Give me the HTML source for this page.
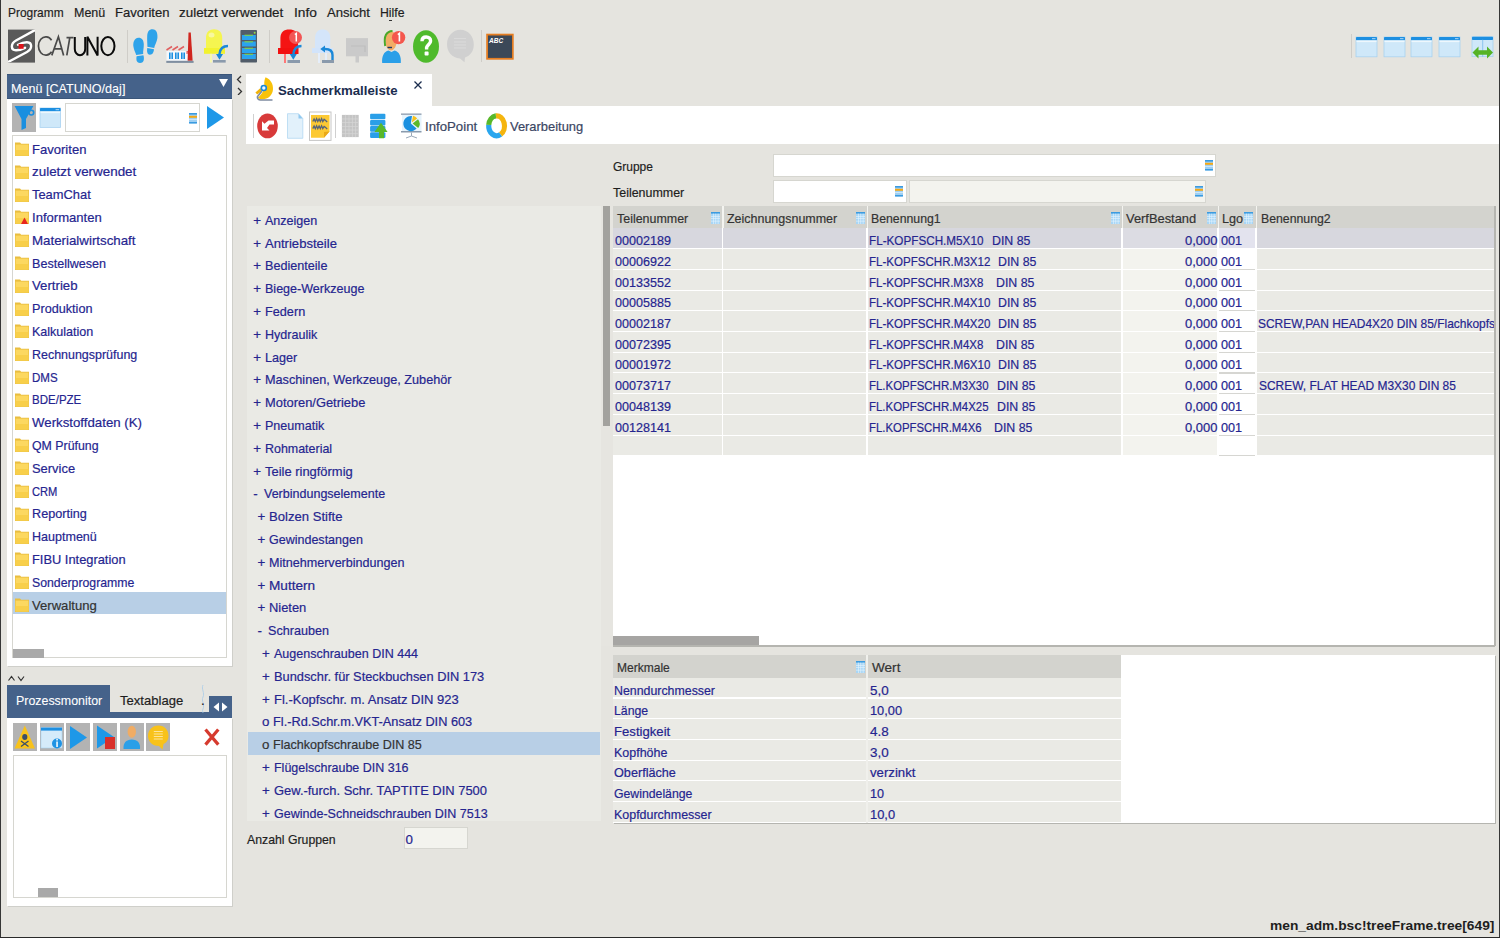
<!DOCTYPE html>
<html><head><meta charset="utf-8"><style>
html,body{margin:0;padding:0}
body{width:1500px;height:938px;overflow:hidden;position:relative;background:#e5e4df;font-family:"Liberation Sans",sans-serif}
.t{position:absolute;white-space:pre;line-height:1;font-family:"Liberation Sans",sans-serif;-webkit-text-stroke:0.2px}
.r{position:absolute}
</style></head><body>
<div class="r" style="left:0px;top:0px;width:1.2px;height:938px;background:#363636"></div>
<div class="r" style="left:1498.8px;top:0px;width:1.2px;height:938px;background:#363636"></div>
<div class="r" style="left:0px;top:936.8px;width:1500px;height:1.2px;background:#2a2a2a"></div>
<div class="t" style="left:7.6px;top:5.74px;font-size:13.3px;color:#1e1e1e;font-weight:normal;transform:scaleX(0.8956);transform-origin:0 0;">Programm</div>
<div class="t" style="left:74px;top:5.74px;font-size:13.3px;color:#1e1e1e;font-weight:normal;transform:scaleX(0.9379);transform-origin:0 0;">Menü</div>
<div class="t" style="left:114.5px;top:5.74px;font-size:13.3px;color:#1e1e1e;font-weight:normal;transform:scaleX(0.9831);transform-origin:0 0;">Favoriten</div>
<div class="t" style="left:179.3px;top:5.74px;font-size:13.3px;color:#1e1e1e;font-weight:normal;transform:scaleX(1.0079);transform-origin:0 0;">zuletzt verwendet</div>
<div class="t" style="left:293.7px;top:5.74px;font-size:13.3px;color:#1e1e1e;font-weight:normal;transform:scaleX(1.0321);transform-origin:0 0;">Info</div>
<div class="t" style="left:327.2px;top:5.74px;font-size:13.3px;color:#1e1e1e;font-weight:normal;transform:scaleX(0.9860);transform-origin:0 0;">Ansicht</div>
<div class="t" style="left:379.5px;top:5.74px;font-size:13.3px;color:#1e1e1e;font-weight:normal;transform:scaleX(0.9207);transform-origin:0 0;">Hilfe</div>
<div class="r" style="left:389px;top:19.5px;width:3px;height:1px;background:#333"></div>
<div class="r" style="left:7px;top:74px;width:225px;height:25px;background:#45628a;box-shadow:inset 0 1px 0 #3b5679, inset 0 -1px 0 #3b5679"></div>
<div class="t" style="left:11.1px;top:81.54px;font-size:13.3px;color:#ffffff;font-weight:normal;transform:scaleX(0.9458);transform-origin:0 0;-webkit-text-stroke:0.1px">Menü [CATUNO/daj]</div>
<svg class="r" style="left:219px;top:79px" width="9" height="8" viewBox="0 0 9 8"><path d="M0 0H9L4.5 8Z" fill="#fff"/></svg>
<div class="r" style="left:7px;top:99px;width:225px;height:567px;background:#fff;box-shadow:1px 1px 0 #cfcfca"></div>
<div class="r" style="left:12px;top:103px;width:24px;height:29px;background:#b3b3b3"></div>
<div class="r" style="left:65px;top:103px;width:135px;height:29px;background:#fff;border:1px solid #d6d6d0;box-sizing:border-box"></div>
<div class="r" style="left:12px;top:135px;width:215px;height:523px;background:#fff;border:1px solid #d6d6d0;box-sizing:border-box"></div>
<div class="t" style="left:31.9px;top:142.64px;font-size:13.3px;color:#25258f;font-weight:normal;transform:scaleX(0.9813);transform-origin:0 0;">Favoriten</div>
<div class="t" style="left:31.9px;top:165.44px;font-size:13.3px;color:#25258f;font-weight:normal;transform:scaleX(1.0079);transform-origin:0 0;">zuletzt verwendet</div>
<div class="t" style="left:31.9px;top:188.24px;font-size:13.3px;color:#25258f;font-weight:normal;transform:scaleX(0.9701);transform-origin:0 0;">TeamChat</div>
<div class="t" style="left:31.9px;top:211.04px;font-size:13.3px;color:#25258f;font-weight:normal;transform:scaleX(0.9835);transform-origin:0 0;">Informanten</div>
<div class="t" style="left:31.9px;top:233.84px;font-size:13.3px;color:#25258f;font-weight:normal;transform:scaleX(1.0005);transform-origin:0 0;">Materialwirtschaft</div>
<div class="t" style="left:31.9px;top:256.64px;font-size:13.3px;color:#25258f;font-weight:normal;transform:scaleX(0.9456);transform-origin:0 0;">Bestellwesen</div>
<div class="t" style="left:31.9px;top:279.44px;font-size:13.3px;color:#25258f;font-weight:normal;transform:scaleX(0.9928);transform-origin:0 0;">Vertrieb</div>
<div class="t" style="left:31.9px;top:302.24px;font-size:13.3px;color:#25258f;font-weight:normal;transform:scaleX(0.9516);transform-origin:0 0;">Produktion</div>
<div class="t" style="left:31.9px;top:325.04px;font-size:13.3px;color:#25258f;font-weight:normal;transform:scaleX(0.9422);transform-origin:0 0;">Kalkulation</div>
<div class="t" style="left:31.9px;top:347.84px;font-size:13.3px;color:#25258f;font-weight:normal;transform:scaleX(0.9370);transform-origin:0 0;">Rechnungsprüfung</div>
<div class="t" style="left:31.9px;top:370.64px;font-size:13.3px;color:#25258f;font-weight:normal;transform:scaleX(0.8693);transform-origin:0 0;">DMS</div>
<div class="t" style="left:31.9px;top:393.44px;font-size:13.3px;color:#25258f;font-weight:normal;transform:scaleX(0.8663);transform-origin:0 0;">BDE/PZE</div>
<div class="t" style="left:31.9px;top:416.24px;font-size:13.3px;color:#25258f;font-weight:normal;transform:scaleX(0.9966);transform-origin:0 0;">Werkstoffdaten (K)</div>
<div class="t" style="left:31.9px;top:439.04px;font-size:13.3px;color:#25258f;font-weight:normal;transform:scaleX(0.9276);transform-origin:0 0;">QM Prüfung</div>
<div class="t" style="left:31.9px;top:461.84px;font-size:13.3px;color:#25258f;font-weight:normal;transform:scaleX(0.9720);transform-origin:0 0;">Service</div>
<div class="t" style="left:31.9px;top:484.64px;font-size:13.3px;color:#25258f;font-weight:normal;transform:scaleX(0.8384);transform-origin:0 0;">CRM</div>
<div class="t" style="left:31.9px;top:507.44px;font-size:13.3px;color:#25258f;font-weight:normal;transform:scaleX(0.9505);transform-origin:0 0;">Reporting</div>
<div class="t" style="left:31.9px;top:530.24px;font-size:13.3px;color:#25258f;font-weight:normal;transform:scaleX(0.9425);transform-origin:0 0;">Hauptmenü</div>
<div class="t" style="left:31.9px;top:553.04px;font-size:13.3px;color:#25258f;font-weight:normal;transform:scaleX(0.9667);transform-origin:0 0;">FIBU Integration</div>
<div class="t" style="left:31.9px;top:575.84px;font-size:13.3px;color:#25258f;font-weight:normal;transform:scaleX(0.9236);transform-origin:0 0;">Sonderprogramme</div>
<div class="r" style="left:13px;top:592.3px;width:213px;height:22px;background:#b8cfe6"></div>
<div class="t" style="left:31.9px;top:598.64px;font-size:13.3px;color:#333;font-weight:normal;transform:scaleX(0.9848);transform-origin:0 0;">Verwaltung</div>
<div class="r" style="left:13px;top:649px;width:31px;height:9px;background:#a9a9a9"></div>
<svg class="r" style="left:7px;top:674px" width="20" height="8" viewBox="0 0 20 8"><path d="M1.5 6.5L4.5 2.5L7.5 6.5M11 2.5L14 6.5L17 2.5" stroke="#333" stroke-width="1.2" fill="none"/></svg>
<div class="r" style="left:7px;top:685px;width:103px;height:33px;background:#45628a"></div>
<div class="r" style="left:7px;top:712px;width:225px;height:6px;background:#45628a"></div>
<div class="r" style="left:209px;top:696px;width:23px;height:22px;background:#45628a"></div>
<svg class="r" style="left:209px;top:696px" width="23" height="22" viewBox="0 0 23 22"><path d="M4.5 11L10 6.5V15.5Z M18.5 11L13 6.5V15.5Z" fill="#fff"/></svg>
<svg class="r" style="left:200px;top:685px" width="6" height="28" viewBox="0 0 6 28"><path d="M3 0 C1 4 5 8 3 12 C1 16 5 20 3 24 C2 26 3 27 3 28" stroke="#a8cbe8" stroke-width="0.8" fill="none"/></svg>
<div class="t" style="left:16px;top:694.14px;font-size:13.3px;color:#ffffff;font-weight:normal;transform:scaleX(0.9332);transform-origin:0 0;-webkit-text-stroke:0.1px">Prozessmonitor</div>
<div class="t" style="left:120px;top:694.14px;font-size:13.3px;color:#1e1e1e;font-weight:normal;transform:scaleX(0.9825);transform-origin:0 0;">Textablage</div>
<div class="t" style="left:201px;top:694.14px;font-size:13.3px;color:#1e1e1e;font-weight:normal;">.</div>
<div class="r" style="left:7px;top:718px;width:225px;height:188px;background:#fff;box-shadow:1px 1px 0 #cfcfca"></div>
<div class="r" style="left:13px;top:723px;width:24px;height:28px;background:#b3b3b3"></div>
<div class="r" style="left:40px;top:723px;width:24px;height:28px;background:#b3b3b3"></div>
<div class="r" style="left:66px;top:723px;width:24px;height:28px;background:#b3b3b3"></div>
<div class="r" style="left:93px;top:723px;width:24px;height:28px;background:#b3b3b3"></div>
<div class="r" style="left:120px;top:723px;width:24px;height:28px;background:#b3b3b3"></div>
<div class="r" style="left:146px;top:723px;width:24px;height:28px;background:#b3b3b3"></div>
<div class="r" style="left:13px;top:755px;width:214px;height:143px;background:#fff;border:1px solid #d6d6d0;box-sizing:border-box"></div>
<div class="r" style="left:38px;top:888px;width:20px;height:9px;background:#a9a9a9"></div>
<svg class="r" style="left:236px;top:75px" width="7" height="20" viewBox="0 0 7 20"><path d="M5 1L1.5 4.5L5 8M2 13L5.5 16.5L2 20" stroke="#333" stroke-width="1.3" fill="none"/></svg>
<div class="r" style="left:246px;top:74px;width:186px;height:32px;background:#fff"></div>
<div class="t" style="left:277.9px;top:84.44px;font-size:13.3px;color:#1b2d4f;font-weight:bold;-webkit-text-stroke:0;transform:scaleX(0.9918);transform-origin:0 0;">Sachmerkmalleiste</div>
<svg class="r" style="left:414px;top:81px" width="8" height="8" viewBox="0 0 8 8"><path d="M0.5 0.5L7.5 7.5M7.5 0.5L0.5 7.5" stroke="#1b2d4f" stroke-width="1.3"/></svg>
<div class="r" style="left:246px;top:106px;width:1253px;height:38px;background:#fff"></div>
<div class="t" style="left:425px;top:120.04px;font-size:13.3px;color:#3a4663;font-weight:normal;transform:scaleX(0.9943);transform-origin:0 0;">InfoPoint</div>
<div class="t" style="left:510px;top:120.04px;font-size:13.3px;color:#3a4663;font-weight:normal;transform:scaleX(0.9707);transform-origin:0 0;">Verarbeitung</div>
<div class="t" style="left:613px;top:160.44px;font-size:13.3px;color:#1e1e1e;font-weight:normal;transform:scaleX(0.8995);transform-origin:0 0;">Gruppe</div>
<div class="t" style="left:613px;top:186.04px;font-size:13.3px;color:#1e1e1e;font-weight:normal;transform:scaleX(0.9353);transform-origin:0 0;">Teilenummer</div>
<div class="r" style="left:773px;top:154px;width:443px;height:23px;background:#fff;border:1px solid #d6d6d0;box-sizing:border-box"></div>
<div class="r" style="left:773px;top:180px;width:134px;height:22.5px;background:#fff;border:1px solid #d6d6d0;box-sizing:border-box"></div>
<div class="r" style="left:909px;top:180px;width:297px;height:22.5px;background:#f3f3ee;border:1px solid #d6d6d0;box-sizing:border-box"></div>
<div class="r" style="left:247px;top:206px;width:354px;height:615px;background:#eaeae5"></div>
<div class="r" style="left:601px;top:206px;width:12px;height:440px;background:#e6e5e0"></div>
<div class="r" style="left:602.5px;top:206px;width:7.5px;height:220px;background:#a3a29e"></div>
<div class="t" style="left:253.2px;top:213.74px;font-size:13.3px;color:#25258f;font-weight:normal;">+</div>
<div class="t" style="left:264.8px;top:213.74px;font-size:13.3px;color:#25258f;font-weight:normal;transform:scaleX(0.9431);transform-origin:0 0;">Anzeigen</div>
<div class="t" style="left:253.2px;top:236.54px;font-size:13.3px;color:#25258f;font-weight:normal;">+</div>
<div class="t" style="left:264.8px;top:236.54px;font-size:13.3px;color:#25258f;font-weight:normal;transform:scaleX(0.9826);transform-origin:0 0;">Antriebsteile</div>
<div class="t" style="left:253.2px;top:259.34px;font-size:13.3px;color:#25258f;font-weight:normal;">+</div>
<div class="t" style="left:264.8px;top:259.34px;font-size:13.3px;color:#25258f;font-weight:normal;transform:scaleX(0.9484);transform-origin:0 0;">Bedienteile</div>
<div class="t" style="left:253.2px;top:282.14px;font-size:13.3px;color:#25258f;font-weight:normal;">+</div>
<div class="t" style="left:264.8px;top:282.14px;font-size:13.3px;color:#25258f;font-weight:normal;transform:scaleX(0.9426);transform-origin:0 0;">Biege-Werkzeuge</div>
<div class="t" style="left:253.2px;top:304.94px;font-size:13.3px;color:#25258f;font-weight:normal;">+</div>
<div class="t" style="left:264.8px;top:304.94px;font-size:13.3px;color:#25258f;font-weight:normal;transform:scaleX(0.9539);transform-origin:0 0;">Federn</div>
<div class="t" style="left:253.2px;top:327.74px;font-size:13.3px;color:#25258f;font-weight:normal;">+</div>
<div class="t" style="left:264.8px;top:327.74px;font-size:13.3px;color:#25258f;font-weight:normal;transform:scaleX(0.9437);transform-origin:0 0;">Hydraulik</div>
<div class="t" style="left:253.2px;top:350.54px;font-size:13.3px;color:#25258f;font-weight:normal;">+</div>
<div class="t" style="left:264.8px;top:350.54px;font-size:13.3px;color:#25258f;font-weight:normal;transform:scaleX(0.9496);transform-origin:0 0;">Lager</div>
<div class="t" style="left:253.2px;top:373.34px;font-size:13.3px;color:#25258f;font-weight:normal;">+</div>
<div class="t" style="left:264.8px;top:373.34px;font-size:13.3px;color:#25258f;font-weight:normal;transform:scaleX(0.9534);transform-origin:0 0;">Maschinen, Werkzeuge, Zubehör</div>
<div class="t" style="left:253.2px;top:396.14px;font-size:13.3px;color:#25258f;font-weight:normal;">+</div>
<div class="t" style="left:264.8px;top:396.14px;font-size:13.3px;color:#25258f;font-weight:normal;transform:scaleX(0.9702);transform-origin:0 0;">Motoren/Getriebe</div>
<div class="t" style="left:253.2px;top:418.94px;font-size:13.3px;color:#25258f;font-weight:normal;">+</div>
<div class="t" style="left:264.8px;top:418.94px;font-size:13.3px;color:#25258f;font-weight:normal;transform:scaleX(0.9423);transform-origin:0 0;">Pneumatik</div>
<div class="t" style="left:253.2px;top:441.74px;font-size:13.3px;color:#25258f;font-weight:normal;">+</div>
<div class="t" style="left:264.8px;top:441.74px;font-size:13.3px;color:#25258f;font-weight:normal;transform:scaleX(0.9360);transform-origin:0 0;">Rohmaterial</div>
<div class="t" style="left:253.2px;top:464.54px;font-size:13.3px;color:#25258f;font-weight:normal;">+</div>
<div class="t" style="left:264.8px;top:464.54px;font-size:13.3px;color:#25258f;font-weight:normal;transform:scaleX(0.9728);transform-origin:0 0;">Teile ringförmig</div>
<div class="t" style="left:253.2px;top:487.34px;font-size:13.3px;color:#25258f;font-weight:normal;">-</div>
<div class="t" style="left:263.7px;top:487.34px;font-size:13.3px;color:#25258f;font-weight:normal;transform:scaleX(0.9414);transform-origin:0 0;">Verbindungselemente</div>
<div class="t" style="left:257.5px;top:510.14px;font-size:13.3px;color:#25258f;font-weight:normal;">+</div>
<div class="t" style="left:269.1px;top:510.14px;font-size:13.3px;color:#25258f;font-weight:normal;transform:scaleX(0.9845);transform-origin:0 0;">Bolzen Stifte</div>
<div class="t" style="left:257.5px;top:532.94px;font-size:13.3px;color:#25258f;font-weight:normal;">+</div>
<div class="t" style="left:269.1px;top:532.94px;font-size:13.3px;color:#25258f;font-weight:normal;transform:scaleX(0.9408);transform-origin:0 0;">Gewindestangen</div>
<div class="t" style="left:257.5px;top:555.74px;font-size:13.3px;color:#25258f;font-weight:normal;">+</div>
<div class="t" style="left:269.1px;top:555.74px;font-size:13.3px;color:#25258f;font-weight:normal;transform:scaleX(0.9449);transform-origin:0 0;">Mitnehmerverbindungen</div>
<div class="t" style="left:257.5px;top:578.54px;font-size:13.3px;color:#25258f;font-weight:normal;">+</div>
<div class="t" style="left:269.1px;top:578.54px;font-size:13.3px;color:#25258f;font-weight:normal;transform:scaleX(1.0245);transform-origin:0 0;">Muttern</div>
<div class="t" style="left:257.5px;top:601.34px;font-size:13.3px;color:#25258f;font-weight:normal;">+</div>
<div class="t" style="left:269.1px;top:601.34px;font-size:13.3px;color:#25258f;font-weight:normal;transform:scaleX(0.9704);transform-origin:0 0;">Nieten</div>
<div class="t" style="left:257.5px;top:624.14px;font-size:13.3px;color:#25258f;font-weight:normal;">-</div>
<div class="t" style="left:268.0px;top:624.14px;font-size:13.3px;color:#25258f;font-weight:normal;transform:scaleX(0.9467);transform-origin:0 0;">Schrauben</div>
<div class="t" style="left:261.9px;top:646.94px;font-size:13.3px;color:#25258f;font-weight:normal;">+</div>
<div class="t" style="left:273.5px;top:646.94px;font-size:13.3px;color:#25258f;font-weight:normal;transform:scaleX(0.9416);transform-origin:0 0;">Augenschrauben DIN 444</div>
<div class="t" style="left:261.9px;top:669.74px;font-size:13.3px;color:#25258f;font-weight:normal;">+</div>
<div class="t" style="left:273.5px;top:669.74px;font-size:13.3px;color:#25258f;font-weight:normal;transform:scaleX(0.9640);transform-origin:0 0;">Bundschr. für Steckbuchsen DIN 173</div>
<div class="t" style="left:261.9px;top:692.54px;font-size:13.3px;color:#25258f;font-weight:normal;">+</div>
<div class="t" style="left:273.5px;top:692.54px;font-size:13.3px;color:#25258f;font-weight:normal;transform:scaleX(0.9763);transform-origin:0 0;">Fl.-Kopfschr. m. Ansatz DIN 923</div>
<div class="t" style="left:261.9px;top:715.34px;font-size:13.3px;color:#25258f;font-weight:normal;">o</div>
<div class="t" style="left:272.9px;top:715.34px;font-size:13.3px;color:#25258f;font-weight:normal;transform:scaleX(0.9593);transform-origin:0 0;">Fl.-Rd.Schr.m.VKT-Ansatz DIN 603</div>
<div class="r" style="left:248px;top:732.0px;width:352px;height:22.6px;background:#b8cfe6"></div>
<div class="t" style="left:261.9px;top:738.14px;font-size:13.3px;color:#333;font-weight:normal;">o</div>
<div class="t" style="left:272.9px;top:738.14px;font-size:13.3px;color:#333;font-weight:normal;transform:scaleX(0.9451);transform-origin:0 0;">Flachkopfschraube DIN 85</div>
<div class="t" style="left:261.9px;top:760.94px;font-size:13.3px;color:#25258f;font-weight:normal;">+</div>
<div class="t" style="left:273.5px;top:760.94px;font-size:13.3px;color:#25258f;font-weight:normal;transform:scaleX(0.9380);transform-origin:0 0;">Flügelschraube DIN 316</div>
<div class="t" style="left:261.9px;top:783.74px;font-size:13.3px;color:#25258f;font-weight:normal;">+</div>
<div class="t" style="left:273.5px;top:783.74px;font-size:13.3px;color:#25258f;font-weight:normal;transform:scaleX(0.9727);transform-origin:0 0;">Gew.-furch. Schr. TAPTITE DIN 7500</div>
<div class="t" style="left:261.9px;top:806.54px;font-size:13.3px;color:#25258f;font-weight:normal;">+</div>
<div class="t" style="left:273.5px;top:806.54px;font-size:13.3px;color:#25258f;font-weight:normal;transform:scaleX(0.9417);transform-origin:0 0;">Gewinde-Schneidschrauben DIN 7513</div>
<div class="t" style="left:246.5px;top:833.44px;font-size:13.3px;color:#1e1e1e;font-weight:normal;transform:scaleX(0.9229);transform-origin:0 0;">Anzahl Gruppen</div>
<div class="r" style="left:404px;top:827px;width:64px;height:22px;background:#f3f3ee;border:1px solid #d6d6d0;box-sizing:border-box"></div>
<div class="t" style="left:405.5px;top:832.74px;font-size:13.3px;color:#25258f;font-weight:normal;">0</div>
<div class="r" style="left:613px;top:206px;width:882px;height:440px;background:#fff"></div>
<div class="r" style="left:613px;top:206px;width:882px;height:22px;background:#d3d3ce"></div>
<div class="r" style="left:613px;top:228.4px;width:109px;height:19.7px;background:#d7d7de"></div>
<div class="r" style="left:723px;top:228.4px;width:143px;height:19.7px;background:#d7d7de"></div>
<div class="r" style="left:868px;top:228.4px;width:253px;height:19.7px;background:#d7d7de"></div>
<div class="r" style="left:1123px;top:228.4px;width:94px;height:19.7px;background:#dcdce3"></div>
<div class="r" style="left:1219px;top:228.4px;width:36px;height:19.7px;background:#e3e3ee"></div>
<div class="r" style="left:1257px;top:228.4px;width:238px;height:19.7px;background:#d7d7de"></div>
<div class="r" style="left:613px;top:249.12px;width:109px;height:19.7px;background:#eaeae5"></div>
<div class="r" style="left:723px;top:249.12px;width:143px;height:19.7px;background:#eaeae5"></div>
<div class="r" style="left:868px;top:249.12px;width:253px;height:19.7px;background:#eaeae5"></div>
<div class="r" style="left:1123px;top:249.12px;width:94px;height:19.7px;background:#f3f3ee"></div>
<div class="r" style="left:1219px;top:249.12px;width:36px;height:19.7px;background:#ffffff"></div>
<div class="r" style="left:1257px;top:249.12px;width:238px;height:19.7px;background:#eaeae5"></div>
<div class="r" style="left:613px;top:269.84px;width:109px;height:19.7px;background:#eaeae5"></div>
<div class="r" style="left:723px;top:269.84px;width:143px;height:19.7px;background:#eaeae5"></div>
<div class="r" style="left:868px;top:269.84px;width:253px;height:19.7px;background:#eaeae5"></div>
<div class="r" style="left:1123px;top:269.84px;width:94px;height:19.7px;background:#f3f3ee"></div>
<div class="r" style="left:1219px;top:269.84px;width:36px;height:19.7px;background:#ffffff"></div>
<div class="r" style="left:1257px;top:269.84px;width:238px;height:19.7px;background:#eaeae5"></div>
<div class="r" style="left:613px;top:290.56px;width:109px;height:19.7px;background:#eaeae5"></div>
<div class="r" style="left:723px;top:290.56px;width:143px;height:19.7px;background:#eaeae5"></div>
<div class="r" style="left:868px;top:290.56px;width:253px;height:19.7px;background:#eaeae5"></div>
<div class="r" style="left:1123px;top:290.56px;width:94px;height:19.7px;background:#f3f3ee"></div>
<div class="r" style="left:1219px;top:290.56px;width:36px;height:19.7px;background:#ffffff"></div>
<div class="r" style="left:1257px;top:290.56px;width:238px;height:19.7px;background:#eaeae5"></div>
<div class="r" style="left:613px;top:311.28px;width:109px;height:19.7px;background:#eaeae5"></div>
<div class="r" style="left:723px;top:311.28px;width:143px;height:19.7px;background:#eaeae5"></div>
<div class="r" style="left:868px;top:311.28px;width:253px;height:19.7px;background:#eaeae5"></div>
<div class="r" style="left:1123px;top:311.28px;width:94px;height:19.7px;background:#f3f3ee"></div>
<div class="r" style="left:1219px;top:311.28px;width:36px;height:19.7px;background:#ffffff"></div>
<div class="r" style="left:1257px;top:311.28px;width:238px;height:19.7px;background:#eaeae5"></div>
<div class="r" style="left:613px;top:332.0px;width:109px;height:19.7px;background:#eaeae5"></div>
<div class="r" style="left:723px;top:332.0px;width:143px;height:19.7px;background:#eaeae5"></div>
<div class="r" style="left:868px;top:332.0px;width:253px;height:19.7px;background:#eaeae5"></div>
<div class="r" style="left:1123px;top:332.0px;width:94px;height:19.7px;background:#f3f3ee"></div>
<div class="r" style="left:1219px;top:332.0px;width:36px;height:19.7px;background:#ffffff"></div>
<div class="r" style="left:1257px;top:332.0px;width:238px;height:19.7px;background:#eaeae5"></div>
<div class="r" style="left:613px;top:352.72px;width:109px;height:19.7px;background:#eaeae5"></div>
<div class="r" style="left:723px;top:352.72px;width:143px;height:19.7px;background:#eaeae5"></div>
<div class="r" style="left:868px;top:352.72px;width:253px;height:19.7px;background:#eaeae5"></div>
<div class="r" style="left:1123px;top:352.72px;width:94px;height:19.7px;background:#f3f3ee"></div>
<div class="r" style="left:1219px;top:352.72px;width:36px;height:19.7px;background:#ffffff"></div>
<div class="r" style="left:1257px;top:352.72px;width:238px;height:19.7px;background:#eaeae5"></div>
<div class="r" style="left:613px;top:373.44px;width:109px;height:19.7px;background:#eaeae5"></div>
<div class="r" style="left:723px;top:373.44px;width:143px;height:19.7px;background:#eaeae5"></div>
<div class="r" style="left:868px;top:373.44px;width:253px;height:19.7px;background:#eaeae5"></div>
<div class="r" style="left:1123px;top:373.44px;width:94px;height:19.7px;background:#f3f3ee"></div>
<div class="r" style="left:1219px;top:373.44px;width:36px;height:19.7px;background:#ffffff"></div>
<div class="r" style="left:1257px;top:373.44px;width:238px;height:19.7px;background:#eaeae5"></div>
<div class="r" style="left:613px;top:394.16px;width:109px;height:19.7px;background:#eaeae5"></div>
<div class="r" style="left:723px;top:394.16px;width:143px;height:19.7px;background:#eaeae5"></div>
<div class="r" style="left:868px;top:394.16px;width:253px;height:19.7px;background:#eaeae5"></div>
<div class="r" style="left:1123px;top:394.16px;width:94px;height:19.7px;background:#f3f3ee"></div>
<div class="r" style="left:1219px;top:394.16px;width:36px;height:19.7px;background:#ffffff"></div>
<div class="r" style="left:1257px;top:394.16px;width:238px;height:19.7px;background:#eaeae5"></div>
<div class="r" style="left:613px;top:414.88px;width:109px;height:19.7px;background:#eaeae5"></div>
<div class="r" style="left:723px;top:414.88px;width:143px;height:19.7px;background:#eaeae5"></div>
<div class="r" style="left:868px;top:414.88px;width:253px;height:19.7px;background:#eaeae5"></div>
<div class="r" style="left:1123px;top:414.88px;width:94px;height:19.7px;background:#f3f3ee"></div>
<div class="r" style="left:1219px;top:414.88px;width:36px;height:19.7px;background:#ffffff"></div>
<div class="r" style="left:1257px;top:414.88px;width:238px;height:19.7px;background:#eaeae5"></div>
<div class="r" style="left:613px;top:435.6px;width:109px;height:19.7px;background:#eaeae5"></div>
<div class="r" style="left:723px;top:435.6px;width:143px;height:19.7px;background:#eaeae5"></div>
<div class="r" style="left:868px;top:435.6px;width:253px;height:19.7px;background:#eaeae5"></div>
<div class="r" style="left:1123px;top:435.6px;width:94px;height:19.7px;background:#f3f3ee"></div>
<div class="r" style="left:1219px;top:435.6px;width:36px;height:19.7px;background:#ffffff"></div>
<div class="r" style="left:1257px;top:435.6px;width:238px;height:19.7px;background:#eaeae5"></div>
<div class="r" style="left:722px;top:206px;width:1.5px;height:22px;background:#f4f4f0"></div>
<div class="r" style="left:866.5px;top:206px;width:1.5px;height:22px;background:#f4f4f0"></div>
<div class="r" style="left:1121.5px;top:206px;width:1.5px;height:22px;background:#f4f4f0"></div>
<div class="r" style="left:1217.5px;top:206px;width:1.5px;height:22px;background:#f4f4f0"></div>
<div class="r" style="left:1255.5px;top:206px;width:1.5px;height:22px;background:#f4f4f0"></div>
<div class="r" style="left:1219px;top:268.82px;width:36px;height:1.2px;background:#d6d6d2"></div>
<div class="r" style="left:1219px;top:289.54px;width:36px;height:1.2px;background:#d6d6d2"></div>
<div class="r" style="left:1219px;top:310.26px;width:36px;height:1.2px;background:#d6d6d2"></div>
<div class="r" style="left:1219px;top:330.98px;width:36px;height:1.2px;background:#d6d6d2"></div>
<div class="r" style="left:1219px;top:351.7px;width:36px;height:1.2px;background:#d6d6d2"></div>
<div class="r" style="left:1219px;top:372.42px;width:36px;height:1.2px;background:#d6d6d2"></div>
<div class="r" style="left:1219px;top:393.14px;width:36px;height:1.2px;background:#d6d6d2"></div>
<div class="r" style="left:1219px;top:413.86px;width:36px;height:1.2px;background:#d6d6d2"></div>
<div class="r" style="left:1219px;top:434.58px;width:36px;height:1.2px;background:#d6d6d2"></div>
<div class="r" style="left:1219px;top:455.3px;width:36px;height:1.2px;background:#d6d6d2"></div>
<div class="t" style="left:617px;top:211.74px;font-size:13.3px;color:#333;font-weight:normal;transform:scaleX(0.9353);transform-origin:0 0;">Teilenummer</div>
<div class="t" style="left:727px;top:211.74px;font-size:13.3px;color:#333;font-weight:normal;transform:scaleX(0.9377);transform-origin:0 0;">Zeichnungsnummer</div>
<div class="t" style="left:871.3px;top:211.74px;font-size:13.3px;color:#333;font-weight:normal;transform:scaleX(0.9239);transform-origin:0 0;">Benennung1</div>
<div class="t" style="left:1126.4px;top:211.74px;font-size:13.3px;color:#333;font-weight:normal;transform:scaleX(0.9689);transform-origin:0 0;">VerfBestand</div>
<div class="t" style="left:1222.4px;top:211.74px;font-size:13.3px;color:#333;font-weight:normal;transform:scaleX(0.9510);transform-origin:0 0;">Lgo</div>
<div class="t" style="left:1260.6px;top:211.74px;font-size:13.3px;color:#333;font-weight:normal;transform:scaleX(0.9239);transform-origin:0 0;">Benennung2</div>
<div class="t" style="left:614.5px;top:234.14px;font-size:13.3px;color:#25258f;font-weight:normal;transform:scaleX(0.9447);transform-origin:0 0;">00002189</div>
<div class="t" style="left:869.4px;top:234.14px;font-size:13.3px;color:#25258f;font-weight:normal;transform:scaleX(0.8796);transform-origin:0 0;">FL-KOPFSCH.M5X10</div>
<div class="t" style="left:991.8px;top:234.14px;font-size:13.3px;color:#25258f;font-weight:normal;transform:scaleX(0.9277);transform-origin:0 0;">DIN 85</div>
<div class="t" style="left:1185.2px;top:234.14px;font-size:13.3px;color:#25258f;font-weight:normal;transform:scaleX(0.9735);transform-origin:0 0;">0,000</div>
<div class="t" style="left:1220.6px;top:234.14px;font-size:13.3px;color:#25258f;font-weight:normal;transform:scaleX(0.9510);transform-origin:0 0;">001</div>
<div class="t" style="left:614.5px;top:254.86px;font-size:13.3px;color:#25258f;font-weight:normal;transform:scaleX(0.9447);transform-origin:0 0;">00006922</div>
<div class="t" style="left:869.4px;top:254.86px;font-size:13.3px;color:#25258f;font-weight:normal;transform:scaleX(0.8693);transform-origin:0 0;">FL-KOPFSCHR.M3X12</div>
<div class="t" style="left:998.3px;top:254.86px;font-size:13.3px;color:#25258f;font-weight:normal;transform:scaleX(0.9277);transform-origin:0 0;">DIN 85</div>
<div class="t" style="left:1185.2px;top:254.86px;font-size:13.3px;color:#25258f;font-weight:normal;transform:scaleX(0.9735);transform-origin:0 0;">0,000</div>
<div class="t" style="left:1220.6px;top:254.86px;font-size:13.3px;color:#25258f;font-weight:normal;transform:scaleX(0.9510);transform-origin:0 0;">001</div>
<div class="t" style="left:614.5px;top:275.58px;font-size:13.3px;color:#25258f;font-weight:normal;transform:scaleX(0.9447);transform-origin:0 0;">00133552</div>
<div class="t" style="left:869.4px;top:275.58px;font-size:13.3px;color:#25258f;font-weight:normal;transform:scaleX(0.8649);transform-origin:0 0;">FL-KOPFSCHR.M3X8</div>
<div class="t" style="left:995.7px;top:275.58px;font-size:13.3px;color:#25258f;font-weight:normal;transform:scaleX(0.9277);transform-origin:0 0;">DIN 85</div>
<div class="t" style="left:1185.2px;top:275.58px;font-size:13.3px;color:#25258f;font-weight:normal;transform:scaleX(0.9735);transform-origin:0 0;">0,000</div>
<div class="t" style="left:1220.6px;top:275.58px;font-size:13.3px;color:#25258f;font-weight:normal;transform:scaleX(0.9510);transform-origin:0 0;">001</div>
<div class="t" style="left:614.5px;top:296.30px;font-size:13.3px;color:#25258f;font-weight:normal;transform:scaleX(0.9447);transform-origin:0 0;">00005885</div>
<div class="t" style="left:869.4px;top:296.30px;font-size:13.3px;color:#25258f;font-weight:normal;transform:scaleX(0.8693);transform-origin:0 0;">FL-KOPFSCHR.M4X10</div>
<div class="t" style="left:998.3px;top:296.30px;font-size:13.3px;color:#25258f;font-weight:normal;transform:scaleX(0.9277);transform-origin:0 0;">DIN 85</div>
<div class="t" style="left:1185.2px;top:296.30px;font-size:13.3px;color:#25258f;font-weight:normal;transform:scaleX(0.9735);transform-origin:0 0;">0,000</div>
<div class="t" style="left:1220.6px;top:296.30px;font-size:13.3px;color:#25258f;font-weight:normal;transform:scaleX(0.9510);transform-origin:0 0;">001</div>
<div class="t" style="left:614.5px;top:317.02px;font-size:13.3px;color:#25258f;font-weight:normal;transform:scaleX(0.9447);transform-origin:0 0;">00002187</div>
<div class="t" style="left:869.4px;top:317.02px;font-size:13.3px;color:#25258f;font-weight:normal;transform:scaleX(0.8693);transform-origin:0 0;">FL-KOPFSCHR.M4X20</div>
<div class="t" style="left:998.3px;top:317.02px;font-size:13.3px;color:#25258f;font-weight:normal;transform:scaleX(0.9277);transform-origin:0 0;">DIN 85</div>
<div class="t" style="left:1185.2px;top:317.02px;font-size:13.3px;color:#25258f;font-weight:normal;transform:scaleX(0.9735);transform-origin:0 0;">0,000</div>
<div class="t" style="left:1220.6px;top:317.02px;font-size:13.3px;color:#25258f;font-weight:normal;transform:scaleX(0.9510);transform-origin:0 0;">001</div>
<div class="t" style="left:614.5px;top:337.74px;font-size:13.3px;color:#25258f;font-weight:normal;transform:scaleX(0.9447);transform-origin:0 0;">00072395</div>
<div class="t" style="left:869.4px;top:337.74px;font-size:13.3px;color:#25258f;font-weight:normal;transform:scaleX(0.8649);transform-origin:0 0;">FL-KOPFSCHR.M4X8</div>
<div class="t" style="left:995.7px;top:337.74px;font-size:13.3px;color:#25258f;font-weight:normal;transform:scaleX(0.9277);transform-origin:0 0;">DIN 85</div>
<div class="t" style="left:1185.2px;top:337.74px;font-size:13.3px;color:#25258f;font-weight:normal;transform:scaleX(0.9735);transform-origin:0 0;">0,000</div>
<div class="t" style="left:1220.6px;top:337.74px;font-size:13.3px;color:#25258f;font-weight:normal;transform:scaleX(0.9510);transform-origin:0 0;">001</div>
<div class="t" style="left:614.5px;top:358.46px;font-size:13.3px;color:#25258f;font-weight:normal;transform:scaleX(0.9447);transform-origin:0 0;">00001972</div>
<div class="t" style="left:869.4px;top:358.46px;font-size:13.3px;color:#25258f;font-weight:normal;transform:scaleX(0.8693);transform-origin:0 0;">FL-KOPFSCHR.M6X10</div>
<div class="t" style="left:998.3px;top:358.46px;font-size:13.3px;color:#25258f;font-weight:normal;transform:scaleX(0.9277);transform-origin:0 0;">DIN 85</div>
<div class="t" style="left:1185.2px;top:358.46px;font-size:13.3px;color:#25258f;font-weight:normal;transform:scaleX(0.9735);transform-origin:0 0;">0,000</div>
<div class="t" style="left:1220.6px;top:358.46px;font-size:13.3px;color:#25258f;font-weight:normal;transform:scaleX(0.9510);transform-origin:0 0;">001</div>
<div class="t" style="left:614.5px;top:379.18px;font-size:13.3px;color:#25258f;font-weight:normal;transform:scaleX(0.9447);transform-origin:0 0;">00073717</div>
<div class="t" style="left:869.4px;top:379.18px;font-size:13.3px;color:#25258f;font-weight:normal;transform:scaleX(0.8609);transform-origin:0 0;">FL.KOPFSCHR.M3X30</div>
<div class="t" style="left:996.6px;top:379.18px;font-size:13.3px;color:#25258f;font-weight:normal;transform:scaleX(0.9277);transform-origin:0 0;">DIN 85</div>
<div class="t" style="left:1185.2px;top:379.18px;font-size:13.3px;color:#25258f;font-weight:normal;transform:scaleX(0.9735);transform-origin:0 0;">0,000</div>
<div class="t" style="left:1220.6px;top:379.18px;font-size:13.3px;color:#25258f;font-weight:normal;transform:scaleX(0.9510);transform-origin:0 0;">001</div>
<div class="t" style="left:614.5px;top:399.90px;font-size:13.3px;color:#25258f;font-weight:normal;transform:scaleX(0.9447);transform-origin:0 0;">00048139</div>
<div class="t" style="left:869.4px;top:399.90px;font-size:13.3px;color:#25258f;font-weight:normal;transform:scaleX(0.8609);transform-origin:0 0;">FL.KOPFSCHR.M4X25</div>
<div class="t" style="left:996.6px;top:399.90px;font-size:13.3px;color:#25258f;font-weight:normal;transform:scaleX(0.9277);transform-origin:0 0;">DIN 85</div>
<div class="t" style="left:1185.2px;top:399.90px;font-size:13.3px;color:#25258f;font-weight:normal;transform:scaleX(0.9735);transform-origin:0 0;">0,000</div>
<div class="t" style="left:1220.6px;top:399.90px;font-size:13.3px;color:#25258f;font-weight:normal;transform:scaleX(0.9510);transform-origin:0 0;">001</div>
<div class="t" style="left:614.5px;top:420.62px;font-size:13.3px;color:#25258f;font-weight:normal;transform:scaleX(0.9447);transform-origin:0 0;">00128141</div>
<div class="t" style="left:869.4px;top:420.62px;font-size:13.3px;color:#25258f;font-weight:normal;transform:scaleX(0.8561);transform-origin:0 0;">FL.KOPFSCHR.M4X6</div>
<div class="t" style="left:994px;top:420.62px;font-size:13.3px;color:#25258f;font-weight:normal;transform:scaleX(0.9277);transform-origin:0 0;">DIN 85</div>
<div class="t" style="left:1185.2px;top:420.62px;font-size:13.3px;color:#25258f;font-weight:normal;transform:scaleX(0.9735);transform-origin:0 0;">0,000</div>
<div class="t" style="left:1220.6px;top:420.62px;font-size:13.3px;color:#25258f;font-weight:normal;transform:scaleX(0.9510);transform-origin:0 0;">001</div>
<div class="r" style="left:1257px;top:313.3px;width:237px;height:19px;overflow:hidden"><div class="t" style="left:0.9px;top:3.74px;font-size:13.3px;color:#25258f;transform:scaleX(0.8992);transform-origin:0 0">SCREW,PAN HEAD4X20 DIN 85/Flachkopfschraube</div></div>
<div class="t" style="left:1258.6px;top:379.18px;font-size:13.3px;color:#25258f;font-weight:normal;transform:scaleX(0.8992);transform-origin:0 0;">SCREW, FLAT HEAD M3X30 DIN 85</div>
<div class="r" style="left:613px;top:635.6px;width:146px;height:9.6px;background:#a6a5a3"></div>
<div class="r" style="left:613px;top:645px;width:882px;height:1.5px;background:#b5b5b0"></div>
<div class="r" style="left:1494px;top:206px;width:1.5px;height:440px;background:#b5b5b0"></div>
<div class="r" style="left:613px;top:655px;width:882px;height:168px;background:#fff;box-shadow:1px 1px 0 #b5b5b0"></div>
<div class="r" style="left:613px;top:655px;width:508px;height:23px;background:#d3d3ce"></div>
<div class="r" style="left:866px;top:655px;width:2px;height:168px;background:#f0f0ec"></div>
<div class="t" style="left:617.4px;top:661.44px;font-size:13.3px;color:#333;font-weight:normal;transform:scaleX(0.9045);transform-origin:0 0;">Merkmale</div>
<div class="t" style="left:871.7px;top:661.44px;font-size:13.3px;color:#333;font-weight:normal;transform:scaleX(1.0206);transform-origin:0 0;">Wert</div>
<div class="r" style="left:613px;top:677.8px;width:253px;height:19.6px;background:#eaeae5"></div>
<div class="r" style="left:868px;top:677.8px;width:253px;height:19.6px;background:#eaeae5"></div>
<div class="t" style="left:614.3px;top:683.54px;font-size:13.3px;color:#25258f;font-weight:normal;transform:scaleX(0.9295);transform-origin:0 0;">Nenndurchmesser</div>
<div class="t" style="left:869.8px;top:683.54px;font-size:13.3px;color:#25258f;font-weight:normal;transform:scaleX(1.0108);transform-origin:0 0;">5,0</div>
<div class="r" style="left:613px;top:698.52px;width:253px;height:19.6px;background:#eaeae5"></div>
<div class="r" style="left:868px;top:698.52px;width:253px;height:19.6px;background:#eaeae5"></div>
<div class="t" style="left:614.3px;top:704.26px;font-size:13.3px;color:#25258f;font-weight:normal;transform:scaleX(0.9247);transform-origin:0 0;">Länge</div>
<div class="t" style="left:869.8px;top:704.26px;font-size:13.3px;color:#25258f;font-weight:normal;transform:scaleX(0.9615);transform-origin:0 0;">10,00</div>
<div class="r" style="left:613px;top:719.24px;width:253px;height:19.6px;background:#eaeae5"></div>
<div class="r" style="left:868px;top:719.24px;width:253px;height:19.6px;background:#eaeae5"></div>
<div class="t" style="left:614.3px;top:724.98px;font-size:13.3px;color:#25258f;font-weight:normal;transform:scaleX(0.9876);transform-origin:0 0;">Festigkeit</div>
<div class="t" style="left:869.8px;top:724.98px;font-size:13.3px;color:#25258f;font-weight:normal;transform:scaleX(1.0108);transform-origin:0 0;">4.8</div>
<div class="r" style="left:613px;top:739.96px;width:253px;height:19.6px;background:#eaeae5"></div>
<div class="r" style="left:868px;top:739.96px;width:253px;height:19.6px;background:#eaeae5"></div>
<div class="t" style="left:614.3px;top:745.70px;font-size:13.3px;color:#25258f;font-weight:normal;transform:scaleX(0.9379);transform-origin:0 0;">Kopfhöhe</div>
<div class="t" style="left:869.8px;top:745.70px;font-size:13.3px;color:#25258f;font-weight:normal;transform:scaleX(1.0108);transform-origin:0 0;">3,0</div>
<div class="r" style="left:613px;top:760.68px;width:253px;height:19.6px;background:#eaeae5"></div>
<div class="r" style="left:868px;top:760.68px;width:253px;height:19.6px;background:#eaeae5"></div>
<div class="t" style="left:614.3px;top:766.42px;font-size:13.3px;color:#25258f;font-weight:normal;transform:scaleX(0.9516);transform-origin:0 0;">Oberfläche</div>
<div class="t" style="left:869.8px;top:766.42px;font-size:13.3px;color:#25258f;font-weight:normal;transform:scaleX(0.9910);transform-origin:0 0;">verzinkt</div>
<div class="r" style="left:613px;top:781.4px;width:253px;height:19.6px;background:#eaeae5"></div>
<div class="r" style="left:868px;top:781.4px;width:253px;height:19.6px;background:#eaeae5"></div>
<div class="t" style="left:614.3px;top:787.14px;font-size:13.3px;color:#25258f;font-weight:normal;transform:scaleX(0.9222);transform-origin:0 0;">Gewindelänge</div>
<div class="t" style="left:869.8px;top:787.14px;font-size:13.3px;color:#25258f;font-weight:normal;transform:scaleX(0.9461);transform-origin:0 0;">10</div>
<div class="r" style="left:613px;top:802.12px;width:253px;height:19.6px;background:#eaeae5"></div>
<div class="r" style="left:868px;top:802.12px;width:253px;height:19.6px;background:#eaeae5"></div>
<div class="t" style="left:614.3px;top:807.86px;font-size:13.3px;color:#25258f;font-weight:normal;transform:scaleX(0.9365);transform-origin:0 0;">Kopfdurchmesser</div>
<div class="t" style="left:869.8px;top:807.86px;font-size:13.3px;color:#25258f;font-weight:normal;transform:scaleX(0.9695);transform-origin:0 0;">10,0</div>
<svg class="r" style="left:5px;top:26px;overflow:visible" width="113" height="40" viewBox="5 26 113 40"><defs><clipPath id="lgc"><rect x="8" y="29.6" width="27" height="33"/></clipPath></defs><rect x="8" y="29.6" width="27" height="33" fill="#5a5a5a"/><g clip-path="url(#lgc)" stroke="#fff" stroke-width="2.4" fill="none" stroke-linecap="round"><path d="M36 29.5 L16 40.5 C10.5 43.5 10.5 50 16 50.2 C19.5 50.3 22.5 49 25 47.8"/><path d="M7 62.6 L27 52 C32.5 49 32.5 42.5 27 42.3 C23.5 42.2 20.5 43.5 18 44.8"/></g><rect x="18.6" y="44" width="5" height="4.8" fill="#e0141b"/><path d="M51.6 40.2 A7.4 9.2 0 1 0 51.6 51.8" stroke="#4a4a4a" stroke-width="1.7" fill="none"/><path d="M51.8 55.4 L58.4 36.8 L63.6 55.4 M54.8 48.8 L61.6 48.8" stroke="#4a4a4a" stroke-width="1.7" fill="none"/><path d="M66.5 37.6 H73.5 M69.8 37.6 L66.8 55.4" stroke="#4a4a4a" stroke-width="1.7" fill="none"/><path d="M74.8 37 V49 A5.2 6.3 0 0 0 85.2 49 V37" stroke="#0a0a0a" stroke-width="2" fill="none"/><path d="M87.4 55.4 V36.8 L97.6 55.4 V36.8" stroke="#0a0a0a" stroke-width="2" fill="none" stroke-linejoin="miter"/><ellipse cx="107.9" cy="46.1" rx="6.6" ry="9.1" stroke="#0a0a0a" stroke-width="2" fill="none"/></svg>
<div class="r" style="left:127px;top:29.6px;width:1px;height:33.1px;background:#cfcdc8"></div>
<svg class="r" style="left:130px;top:27px;overflow:visible" width="30" height="38" viewBox="130 27 30 38"><path d="M138.5 37.7 C134 37.7 132.8 43 133.5 47 C134.2 51 135.8 53 136.2 55 L143.2 54 C142.8 51 144 48 143.8 44 C143.6 40 142 37.7 138.5 37.7Z" fill="#2ea3ea"/><path d="M136.6 56.3 L143.4 55.3 C144.3 58 144.5 63 140 63.1 C136 63.1 136.2 59 136.6 56.3Z" fill="#2ea3ea"/><path d="M152.5 29.3 C156.8 29.3 157.8 34 157.4 38 C157 42 154.6 45 154.2 48 L147.4 46.8 C147.4 43 147 40 147.2 36 C147.4 32 149 29.3 152.5 29.3Z" fill="#2ea3ea"/><path d="M147.3 48.1 L154 49.3 C153.8 52 152.6 54.8 149.8 54.7 C146.8 54.5 146.8 51 147.3 48.1Z" fill="#2ea3ea"/></svg>
<svg class="r" style="left:164px;top:30px;overflow:visible" width="32" height="35" viewBox="164 30 32 35"><rect x="166.5" y="51" width="22" height="10" fill="#f4f8fb"/><path d="M166.5 50 L172 46.5 M172.5 50 L178 46.5 M178.5 50 L184 46.5" stroke="#e06060" stroke-width="1.5"/><rect x="169" y="52.5" width="1.6" height="6.5" fill="#1a8fe0"/><rect x="171.4" y="52.5" width="1.6" height="6.5" fill="#1a8fe0"/><rect x="175" y="52.5" width="1.6" height="6.5" fill="#1a8fe0"/><rect x="177.4" y="52.5" width="1.6" height="6.5" fill="#1a8fe0"/><rect x="181" y="52.5" width="1.6" height="6.5" fill="#1a8fe0"/><rect x="183.4" y="52.5" width="1.6" height="6.5" fill="#1a8fe0"/><path d="M188.5 32.5 H190.8 L192.6 60.8 H187.6Z" fill="#d0261f"/><path d="M186.5 51 L188 51 L187.6 54 L186.5 54Z" fill="#e05050"/><rect x="166.3" y="60.8" width="27.3" height="2.1" fill="#7f8ea0"/></svg>
<svg class="r" style="left:202px;top:27px;overflow:visible" width="29" height="38" viewBox="202 27 29 38"><path d="M206 48 V38 C206 32 209.5 29.3 214.1 29.3 C218.7 29.3 222.2 32 222.2 38 V48Z" fill="#f5f550"/><ellipse cx="211.5" cy="35" rx="3" ry="2.5" fill="#fafac0" opacity="0.7"/><rect x="204" y="48" width="21" height="5.8" fill="#f2f230"/><rect x="210" y="53.8" width="2" height="8.7" fill="#f8f8b0"/><rect x="213" y="60" width="12.7" height="2.6" fill="#8a9aac"/><path d="M228 46 C223 46 220 48.5 219.5 54" stroke="#1a88d8" stroke-width="2.4" fill="none"/><path d="M216 54 H223 L219.5 59.8Z" fill="#1a88d8"/></svg>
<svg class="r" style="left:238px;top:28px;overflow:visible" width="21" height="37" viewBox="238 28 21 37"><rect x="240.4" y="30" width="16.6" height="32.6" rx="0.8" fill="#515c69"/><rect x="242" y="35" width="13.8" height="5" fill="#2aa3ee"/><rect x="244.5" y="34.7" width="8.5" height="1.2" fill="#7ccf50"/><rect x="242" y="41.5" width="13.8" height="5" fill="#2aa3ee"/><rect x="244.5" y="41.2" width="8.5" height="1.2" fill="#7ccf50"/><rect x="242" y="48" width="13.8" height="5" fill="#2aa3ee"/><rect x="244.5" y="47.7" width="8.5" height="1.2" fill="#7ccf50"/><rect x="242" y="54" width="13.8" height="5" fill="#2aa3ee"/><rect x="244.5" y="53.7" width="8.5" height="1.2" fill="#7ccf50"/><circle cx="254.7" cy="32.8" r="1" fill="#8fd94a"/></svg>
<div class="r" style="left:269px;top:29.6px;width:1px;height:33.1px;background:#cfcdc8"></div>
<svg class="r" style="left:276px;top:27px;overflow:visible" width="29" height="38" viewBox="276 27 29 38"><path d="M280.4 48 V38 C280.4 32 284 29.5 289.2 29.5 C294.4 29.5 298 32 298 38 V48Z" fill="#f41414"/><rect x="278" y="48" width="20.5" height="6" fill="#f21010"/><rect x="284" y="54" width="2" height="9" fill="#f77"/><circle cx="295.5" cy="37.5" r="6.5" fill="#f25555"/><path d="M294.8 34.5 L296.3 33.5 V41.5" stroke="#fff" stroke-width="1.5" fill="none"/><rect x="287.5" y="60" width="12.5" height="3" fill="#8a9aac"/><path d="M301.5 46 C297 46 294 48.5 293.3 54" stroke="#1a88d8" stroke-width="2.4" fill="none"/><path d="M289.8 54 H296.8 L293.3 59.8Z" fill="#1a88d8"/></svg>
<svg class="r" style="left:310px;top:27px;overflow:visible" width="26" height="38" viewBox="310 27 26 38"><path d="M315 48 V38 C315 32 318.5 29.5 322.6 29.5 C326.8 29.5 330.3 32 330.3 38 V48Z" fill="#d4e5fa"/><rect x="312" y="48" width="21" height="5" fill="#d2e4fb"/><rect x="318" y="53" width="2" height="10" fill="#e5eefa"/><rect x="325" y="53" width="2" height="7" fill="#e5eefa"/><rect x="322" y="60" width="12" height="3" fill="#8a9aac"/><path d="M332.5 60 V55 C332.5 51 329.5 49 325 49" stroke="#1a88d8" stroke-width="2.4" fill="none"/><path d="M325 45.5 V52.5 L320.3 49Z" fill="#1a88d8"/></svg>
<svg class="r" style="left:344px;top:36px;overflow:visible" width="26" height="28" viewBox="344 36 26 28"><rect x="346" y="38.1" width="22" height="18.2" fill="#cacaca"/><rect x="355.5" y="56" width="3.5" height="6.5" fill="#cacaca"/><path d="M351 46 H365 V52" stroke="#bdbdbd" stroke-width="1.2" fill="none"/></svg>
<svg class="r" style="left:380px;top:28px;overflow:visible" width="27" height="37" viewBox="380 28 27 37"><path d="M382.2 62.9 C381.5 56.5 384 51.2 388.5 50.4 L391.5 52 L394.5 50.4 C399 51.2 401.5 56.5 400.8 62.9Z" fill="#2a9fe8"/><ellipse cx="391" cy="40.8" rx="5.8" ry="9.6" fill="#f2ad66"/><path d="M385.2 46 C383.5 36 386.5 31.2 392.5 31" stroke="#4aa82a" stroke-width="2" fill="none"/><path d="M387.5 47.5 H392" stroke="#1d3a66" stroke-width="1.4"/><circle cx="398.6" cy="37.6" r="6.7" fill="#f4574d"/><path d="M397.8 34.6 L399.4 33.4 V41.6" stroke="#fff" stroke-width="1.6" fill="none"/></svg>
<svg class="r" style="left:411px;top:28px;overflow:visible" width="30" height="37" viewBox="411 28 30 37"><ellipse cx="426" cy="46.5" rx="13" ry="16.2" fill="#4fba2c"/><path d="M422 41.2 C422 38.2 423.8 37 426.2 37 C428.8 37 430.6 38.6 430.6 41 C430.6 44 427.4 44.6 426.6 47.5 V49.5" stroke="#fff" stroke-width="3.4" fill="none"/><rect x="424.6" y="51.6" width="4" height="4" rx="0.8" fill="#fff"/></svg>
<svg class="r" style="left:445px;top:28px;overflow:visible" width="31" height="36" viewBox="445 28 31 36"><path d="M460.5 29.7 C468 29.7 474 36 473.8 45 C473.6 52 469.5 56 465 57.5 L464.5 62.3 L460 58.5 C452 58 447 52 447 44.3 C447 36 453 29.7 460.5 29.7Z" fill="#d0d0d0"/><rect x="454" y="38" width="12" height="0.9" fill="#dcdcdc"/><rect x="454" y="41.5" width="12" height="0.9" fill="#dcdcdc"/><rect x="454" y="44.5" width="12" height="0.9" fill="#dcdcdc"/><rect x="454" y="47.5" width="12" height="0.9" fill="#dcdcdc"/></svg>
<div class="r" style="left:481px;top:30px;width:1px;height:32px;background:#cfcdc8"></div>
<svg class="r" style="left:484px;top:31px;overflow:visible" width="32" height="31" viewBox="484 31 32 31"><rect x="486.2" y="33.7" width="27.5" height="26" fill="#e47d22"/><rect x="488" y="35.5" width="24" height="22.4" fill="#3b4858"/><text x="489" y="43.4" font-family="Liberation Sans" font-weight="bold" font-size="6.5" fill="#fff" font-style="italic">ABC</text></svg>
<div class="r" style="left:1351px;top:34px;width:1px;height:24px;background:#cfcdc8"></div>
<svg class="r" style="left:1355px;top:35.8px;overflow:visible" width="23" height="21.800000000000004" viewBox="1355 35.8 23 21.800000000000004"><rect x="1356" y="36.8" width="21" height="19.800000000000004" fill="#cfe8f9" stroke="#a9d2f0" stroke-width="0.8"/><rect x="1356" y="36.8" width="21" height="3.3" rx="0.8" fill="#1d8fe1"/><rect x="1356.5" y="40.3" width="20" height="1.6" fill="#eef7fd"/><rect x="1372" y="37.9" width="3.5" height="1.1" fill="#9fd0f5"/></svg>
<svg class="r" style="left:1383px;top:35.8px;overflow:visible" width="23" height="21.800000000000004" viewBox="1383 35.8 23 21.800000000000004"><rect x="1384" y="36.8" width="21" height="19.800000000000004" fill="#cfe8f9" stroke="#a9d2f0" stroke-width="0.8"/><rect x="1384" y="36.8" width="21" height="3.3" rx="0.8" fill="#1d8fe1"/><rect x="1384.5" y="40.3" width="20" height="1.6" fill="#eef7fd"/><rect x="1400" y="37.9" width="3.5" height="1.1" fill="#9fd0f5"/></svg>
<svg class="r" style="left:1410px;top:35.8px;overflow:visible" width="23" height="21.800000000000004" viewBox="1410 35.8 23 21.800000000000004"><rect x="1411" y="36.8" width="21" height="19.800000000000004" fill="#cfe8f9" stroke="#a9d2f0" stroke-width="0.8"/><rect x="1411" y="36.8" width="21" height="3.3" rx="0.8" fill="#1d8fe1"/><rect x="1411.5" y="40.3" width="20" height="1.6" fill="#eef7fd"/><rect x="1427" y="37.9" width="3.5" height="1.1" fill="#9fd0f5"/></svg>
<svg class="r" style="left:1438px;top:35.8px;overflow:visible" width="23" height="21.800000000000004" viewBox="1438 35.8 23 21.800000000000004"><rect x="1439" y="36.8" width="21" height="19.800000000000004" fill="#cfe8f9" stroke="#a9d2f0" stroke-width="0.8"/><rect x="1439" y="36.8" width="21" height="3.3" rx="0.8" fill="#1d8fe1"/><rect x="1439.5" y="40.3" width="20" height="1.6" fill="#eef7fd"/><rect x="1455" y="37.9" width="3.5" height="1.1" fill="#9fd0f5"/></svg>
<svg class="r" style="left:1470px;top:35px;overflow:visible" width="25" height="25" viewBox="1470 35 25 25"><rect x="1472" y="36.8" width="21" height="19.8" fill="#cfe8f9" stroke="#a9d2f0" stroke-width="0.8"/><rect x="1472" y="36.8" width="21" height="3.3" rx="0.8" fill="#1d8fe1"/><rect x="1482.2" y="39.8" width="1" height="17" fill="#8cc4ee"/><path d="M1472.5 52.5 L1478.5 46.5 V50.3 H1487 V46.5 L1493 52.5 L1487 58.5 V54.7 H1478.5 V58.5Z" fill="#56b326"/></svg>
<svg class="r" style="left:12px;top:103px;overflow:visible" width="24" height="29" viewBox="12 103 24 29"><path d="M14.6 106 H33.4 L26 119 V128 L21.5 130 V119Z" fill="#1a8fe0"/><circle cx="31.3" cy="112.6" r="2.4" stroke="#1a8fe0" stroke-width="1.6" fill="none"/></svg>
<svg class="r" style="left:39.4px;top:107.2px;overflow:visible" width="22.6" height="21.39999999999999" viewBox="39.4 107.2 22.6 21.39999999999999"><rect x="40.4" y="108.2" width="20.6" height="19.39999999999999" fill="#cfe8f9" stroke="#a9d2f0" stroke-width="0.8"/><rect x="40.4" y="108.2" width="20.6" height="3.3" rx="0.8" fill="#1d8fe1"/><rect x="40.9" y="111.7" width="19.6" height="1.6" fill="#eef7fd"/><rect x="56" y="109.3" width="3.5" height="1.1" fill="#9fd0f5"/></svg>
<svg class="r" style="left:188px;top:112px;overflow:visible" width="10" height="13" viewBox="188 112 10 13"><rect x="189" y="113" width="8" height="10.5" rx="1" fill="#9fd0f3"/><rect x="189" y="113" width="8" height="1.6" fill="#3b9be0"/><rect x="189" y="115.8" width="8" height="2" fill="#f5a814"/><rect x="189" y="119.3" width="8" height="0.7" fill="#dff0fc"/><rect x="189" y="122" width="8" height="1.5" fill="#3b9be0"/></svg>
<svg class="r" style="left:206px;top:105px;overflow:visible" width="19" height="25" viewBox="206 105 19 25"><path d="M207 106 L224 117.5 L207 129Z" fill="#1e98e8"/></svg>
<svg class="r" style="left:14px;top:140.9px;overflow:visible" width="16" height="16.0" viewBox="14 140.9 16 16.0"><path d="M15 142.5 H20 L21.2 143.70000000000002 H29 V155.9 H15Z" fill="#e9be40"/><rect x="15.6" y="144.5" width="12.8" height="10.8" fill="#fcd860"/><rect x="15.6" y="149.9" width="12.8" height="5.4" fill="#f8cf4a"/></svg>
<svg class="r" style="left:14px;top:163.7px;overflow:visible" width="16" height="16.0" viewBox="14 163.7 16 16.0"><path d="M15 165.29999999999998 H20 L21.2 166.5 H29 V178.7 H15Z" fill="#e9be40"/><rect x="15.6" y="167.29999999999998" width="12.8" height="10.8" fill="#fcd860"/><rect x="15.6" y="172.7" width="12.8" height="5.4" fill="#f8cf4a"/></svg>
<svg class="r" style="left:14px;top:186.5px;overflow:visible" width="16" height="16.0" viewBox="14 186.5 16 16.0"><path d="M15 188.1 H20 L21.2 189.3 H29 V201.5 H15Z" fill="#e9be40"/><rect x="15.6" y="190.1" width="12.8" height="10.8" fill="#fcd860"/><rect x="15.6" y="195.5" width="12.8" height="5.4" fill="#f8cf4a"/></svg>
<svg class="r" style="left:14px;top:209.3px;overflow:visible" width="16" height="16.0" viewBox="14 209.3 16 16.0"><path d="M15 210.9 H20 L21.2 212.10000000000002 H29 V224.3 H15Z" fill="#e9be40"/><rect x="15.6" y="212.9" width="12.8" height="10.8" fill="#fcd860"/><rect x="15.6" y="218.3" width="12.8" height="5.4" fill="#f8cf4a"/><path d="M21 224.3 L24.5 217.8 L28 224.3Z" fill="#e8261e"/></svg>
<svg class="r" style="left:14px;top:232.1px;overflow:visible" width="16" height="16.0" viewBox="14 232.1 16 16.0"><path d="M15 233.7 H20 L21.2 234.9 H29 V247.1 H15Z" fill="#e9be40"/><rect x="15.6" y="235.7" width="12.8" height="10.8" fill="#fcd860"/><rect x="15.6" y="241.1" width="12.8" height="5.4" fill="#f8cf4a"/></svg>
<svg class="r" style="left:14px;top:254.9px;overflow:visible" width="16" height="15.999999999999972" viewBox="14 254.9 16 15.999999999999972"><path d="M15 256.5 H20 L21.2 257.7 H29 V269.9 H15Z" fill="#e9be40"/><rect x="15.6" y="258.5" width="12.8" height="10.8" fill="#fcd860"/><rect x="15.6" y="263.9" width="12.8" height="5.4" fill="#f8cf4a"/></svg>
<svg class="r" style="left:14px;top:277.7px;overflow:visible" width="16" height="16.0" viewBox="14 277.7 16 16.0"><path d="M15 279.3 H20 L21.2 280.5 H29 V292.7 H15Z" fill="#e9be40"/><rect x="15.6" y="281.3" width="12.8" height="10.8" fill="#fcd860"/><rect x="15.6" y="286.7" width="12.8" height="5.4" fill="#f8cf4a"/></svg>
<svg class="r" style="left:14px;top:300.5px;overflow:visible" width="16" height="16.0" viewBox="14 300.5 16 16.0"><path d="M15 302.1 H20 L21.2 303.3 H29 V315.5 H15Z" fill="#e9be40"/><rect x="15.6" y="304.1" width="12.8" height="10.8" fill="#fcd860"/><rect x="15.6" y="309.5" width="12.8" height="5.4" fill="#f8cf4a"/></svg>
<svg class="r" style="left:14px;top:323.3px;overflow:visible" width="16" height="16.0" viewBox="14 323.3 16 16.0"><path d="M15 324.90000000000003 H20 L21.2 326.1 H29 V338.3 H15Z" fill="#e9be40"/><rect x="15.6" y="326.90000000000003" width="12.8" height="10.8" fill="#fcd860"/><rect x="15.6" y="332.3" width="12.8" height="5.4" fill="#f8cf4a"/></svg>
<svg class="r" style="left:14px;top:346.1px;overflow:visible" width="16" height="16.0" viewBox="14 346.1 16 16.0"><path d="M15 347.70000000000005 H20 L21.2 348.90000000000003 H29 V361.1 H15Z" fill="#e9be40"/><rect x="15.6" y="349.70000000000005" width="12.8" height="10.8" fill="#fcd860"/><rect x="15.6" y="355.1" width="12.8" height="5.4" fill="#f8cf4a"/></svg>
<svg class="r" style="left:14px;top:368.9px;overflow:visible" width="16" height="16.0" viewBox="14 368.9 16 16.0"><path d="M15 370.5 H20 L21.2 371.7 H29 V383.9 H15Z" fill="#e9be40"/><rect x="15.6" y="372.5" width="12.8" height="10.8" fill="#fcd860"/><rect x="15.6" y="377.9" width="12.8" height="5.4" fill="#f8cf4a"/></svg>
<svg class="r" style="left:14px;top:391.7px;overflow:visible" width="16" height="16.0" viewBox="14 391.7 16 16.0"><path d="M15 393.3 H20 L21.2 394.5 H29 V406.7 H15Z" fill="#e9be40"/><rect x="15.6" y="395.3" width="12.8" height="10.8" fill="#fcd860"/><rect x="15.6" y="400.7" width="12.8" height="5.4" fill="#f8cf4a"/></svg>
<svg class="r" style="left:14px;top:414.5px;overflow:visible" width="16" height="16.0" viewBox="14 414.5 16 16.0"><path d="M15 416.1 H20 L21.2 417.3 H29 V429.5 H15Z" fill="#e9be40"/><rect x="15.6" y="418.1" width="12.8" height="10.8" fill="#fcd860"/><rect x="15.6" y="423.5" width="12.8" height="5.4" fill="#f8cf4a"/></svg>
<svg class="r" style="left:14px;top:437.3px;overflow:visible" width="16" height="16.0" viewBox="14 437.3 16 16.0"><path d="M15 438.90000000000003 H20 L21.2 440.1 H29 V452.3 H15Z" fill="#e9be40"/><rect x="15.6" y="440.90000000000003" width="12.8" height="10.8" fill="#fcd860"/><rect x="15.6" y="446.3" width="12.8" height="5.4" fill="#f8cf4a"/></svg>
<svg class="r" style="left:14px;top:460.1px;overflow:visible" width="16" height="16.0" viewBox="14 460.1 16 16.0"><path d="M15 461.70000000000005 H20 L21.2 462.90000000000003 H29 V475.1 H15Z" fill="#e9be40"/><rect x="15.6" y="463.70000000000005" width="12.8" height="10.8" fill="#fcd860"/><rect x="15.6" y="469.1" width="12.8" height="5.4" fill="#f8cf4a"/></svg>
<svg class="r" style="left:14px;top:482.9px;overflow:visible" width="16" height="16.0" viewBox="14 482.9 16 16.0"><path d="M15 484.5 H20 L21.2 485.7 H29 V497.9 H15Z" fill="#e9be40"/><rect x="15.6" y="486.5" width="12.8" height="10.8" fill="#fcd860"/><rect x="15.6" y="491.9" width="12.8" height="5.4" fill="#f8cf4a"/></svg>
<svg class="r" style="left:14px;top:505.7px;overflow:visible" width="16" height="16.000000000000057" viewBox="14 505.7 16 16.000000000000057"><path d="M15 507.3 H20 L21.2 508.5 H29 V520.7 H15Z" fill="#e9be40"/><rect x="15.6" y="509.3" width="12.8" height="10.8" fill="#fcd860"/><rect x="15.6" y="514.7" width="12.8" height="5.4" fill="#f8cf4a"/></svg>
<svg class="r" style="left:14px;top:528.5px;overflow:visible" width="16" height="16.0" viewBox="14 528.5 16 16.0"><path d="M15 530.1 H20 L21.2 531.3 H29 V543.5 H15Z" fill="#e9be40"/><rect x="15.6" y="532.1" width="12.8" height="10.8" fill="#fcd860"/><rect x="15.6" y="537.5" width="12.8" height="5.4" fill="#f8cf4a"/></svg>
<svg class="r" style="left:14px;top:551.3px;overflow:visible" width="16" height="16.0" viewBox="14 551.3 16 16.0"><path d="M15 552.9 H20 L21.2 554.0999999999999 H29 V566.3 H15Z" fill="#e9be40"/><rect x="15.6" y="554.9" width="12.8" height="10.8" fill="#fcd860"/><rect x="15.6" y="560.3" width="12.8" height="5.4" fill="#f8cf4a"/></svg>
<svg class="r" style="left:14px;top:574.1px;overflow:visible" width="16" height="16.0" viewBox="14 574.1 16 16.0"><path d="M15 575.7 H20 L21.2 576.9 H29 V589.1 H15Z" fill="#e9be40"/><rect x="15.6" y="577.7" width="12.8" height="10.8" fill="#fcd860"/><rect x="15.6" y="583.1" width="12.8" height="5.4" fill="#f8cf4a"/></svg>
<svg class="r" style="left:14px;top:596.9px;overflow:visible" width="16" height="16.0" viewBox="14 596.9 16 16.0"><path d="M15 598.5 H20 L21.2 599.6999999999999 H29 V611.9 H15Z" fill="#e9be40"/><rect x="15.6" y="600.5" width="12.8" height="10.8" fill="#fcd860"/><rect x="15.6" y="605.9" width="12.8" height="5.4" fill="#f8cf4a"/></svg>
<svg class="r" style="left:12px;top:722px;overflow:visible" width="26" height="30" viewBox="12 722 26 30"><path d="M24.8 725.5 L35 748.5 H14.5Z" fill="#f8c21a"/><ellipse cx="24.8" cy="737" rx="2.6" ry="3" fill="#3a4e6a"/><path d="M21 741 L28.5 746.5 M28.5 741 L21 746.5" stroke="#3a4e6a" stroke-width="1.3"/></svg>
<svg class="r" style="left:39px;top:722px;overflow:visible" width="25" height="30" viewBox="39 722 25 30"><rect x="41" y="727.6" width="21" height="20.4" fill="#d5ebfa" stroke="#a9d2f0" stroke-width="0.6"/><rect x="41" y="727.6" width="21" height="3" fill="#1d8fe1"/><circle cx="57" cy="743.5" r="5" fill="#1f93e4"/><rect x="56.3" y="741.5" width="1.5" height="5.5" fill="#fff"/><rect x="56.3" y="739" width="1.5" height="1.5" fill="#fff"/></svg>
<svg class="r" style="left:69px;top:724.5px;overflow:visible" width="19" height="25.0" viewBox="69 724.5 19 25.0"><path d="M70 725.5 L87 737.0 L70 748.5Z" fill="#1e98e8"/></svg>
<svg class="r" style="left:94px;top:723px;overflow:visible" width="23" height="28" viewBox="94 723 23 28"><path d="M97 725.5 L114 737 L97 748.5Z" fill="#1e98e8"/><rect x="105" y="737" width="10" height="12" fill="#d8302a"/></svg>
<svg class="r" style="left:120px;top:723px;overflow:visible" width="24" height="28" viewBox="120 723 24 28"><ellipse cx="131.8" cy="731.8" rx="4.2" ry="6" fill="#f0ac64"/><path d="M123.5 749 C123 743 126 739.8 131.8 739.5 C137.6 739.8 140.6 743 140 749Z" fill="#2a9fe8"/></svg>
<svg class="r" style="left:146px;top:723px;overflow:visible" width="25" height="28" viewBox="146 723 25 28"><path d="M158.5 725.5 C164.5 725.5 168.6 730 168.5 736 C168.4 740.5 166 743 163.5 744 L162.5 749.5 L159 746 C152 746 148 741.5 148 735.8 C148 730 152.5 725.5 158.5 725.5Z" fill="#f8c21a"/><rect x="153.8" y="731" width="9" height="1" fill="#fde49a"/><rect x="153.8" y="733.5" width="9" height="1" fill="#fde49a"/><rect x="153.8" y="736" width="9" height="1" fill="#fde49a"/><rect x="153.8" y="738.5" width="9" height="1" fill="#fde49a"/></svg>
<svg class="r" style="left:202px;top:726px;overflow:visible" width="20" height="22" viewBox="202 726 20 22"><path d="M205.5 729.5 L218.3 744.6 M218.3 729.5 L205.5 744.6" stroke="#d63a2e" stroke-width="3.2"/></svg>
<svg class="r" style="left:254px;top:75px;overflow:visible" width="21" height="27" viewBox="254 75 21 27"><path d="M265.6 77.2 C270.8 79.5 273.3 84 273 89.3 C272.6 95.4 268 99.5 262 99.3 C260.2 99.2 258.8 98.6 257.8 97.4 C262.3 94.2 264.6 89.5 264.3 84.5 C264.1 81.5 264.6 79 265.6 77.2Z" fill="#f8c20a"/><path d="M255.4 92.5 L260.5 88 L262 91 L257.2 94.6Z" fill="#f0b20a"/><path d="M262 91 L257.5 96.5 C257 98.5 258.5 100 260.5 100 H272.5" stroke="#7d8aa0" stroke-width="1.6" fill="none"/><circle cx="263.8" cy="88" r="2.5" stroke="#1a88d8" stroke-width="1.6" fill="#eaf6fd"/></svg>
<div class="r" style="left:252.5px;top:113.7px;width:1px;height:24.299999999999997px;background:#d0d0d0"></div>
<svg class="r" style="left:256px;top:112px;overflow:visible" width="23" height="28" viewBox="256 112 23 28"><ellipse cx="267.5" cy="125.9" rx="10.3" ry="12.4" fill="#d83a3a"/><path d="M262 121.2 L264.5 123.7 L268.5 120.5 H274 V124.5 L269.5 124.5 L267 128 L269.5 130.5 H262Z" fill="#fff"/></svg>
<svg class="r" style="left:286px;top:112px;overflow:visible" width="18" height="28" viewBox="286 112 18 28"><path d="M287.5 113.7 H298.5 L302.8 118.5 V138.3 H287.5Z" fill="#e2f1fb" stroke="#b2d8f1" stroke-width="0.8"/><path d="M298.5 113.7 V118.5 H302.8Z" fill="#8fc8ef"/></svg>
<svg class="r" style="left:308px;top:111px;overflow:visible" width="24" height="31" viewBox="308 111 24 31"><rect x="309.5" y="112" width="21.5" height="28.4" fill="#fff" stroke="#c6c6c6" stroke-width="1"/><path d="M311 115 H329.5 V131.5 L324 137.7 H311Z" fill="#fcc933"/><path d="M329.5 131.5 L324 137.7 V132 Z" fill="#e9a818"/><path d="M312.8 121.5 l1.3-2.6 1.2 2.6 1.3-2.8 1.2 2.8 1.3-2.6 1.2 2.6 1.3-2.8 1.2 2.8 1.3-2.2 1.5 1.2 1.6 1.4" stroke="#56647a" stroke-width="1.3" fill="none"/><path d="M312.8 128.6 l1.3-2.6 1.2 2.6 1.3-2.8 1.2 2.8 1.3-2.6 1.2 2.6 1.3-2.8 1.2 2.8 1.3-2.2 1.5 1.2 1.6 1.4" stroke="#56647a" stroke-width="1.3" fill="none"/></svg>
<div class="r" style="left:335.2px;top:113.7px;width:1px;height:24.299999999999997px;background:#d0d0d0"></div>
<svg class="r" style="left:340px;top:113px;overflow:visible" width="20" height="26" viewBox="340 113 20 26"><rect x="341.9" y="114.9" width="16.8" height="22.2" fill="#c4c4c4"/><rect x="345.26" y="114.9" width="0.7" height="22.2" fill="#d6d6d6"/><rect x="348.62" y="114.9" width="0.7" height="22.2" fill="#d6d6d6"/><rect x="351.97999999999996" y="114.9" width="0.7" height="22.2" fill="#d6d6d6"/><rect x="355.34" y="114.9" width="0.7" height="22.2" fill="#d6d6d6"/><rect x="341.9" y="118.60000000000001" width="16.8" height="0.7" fill="#d6d6d6"/><rect x="341.9" y="122.30000000000001" width="16.8" height="0.7" fill="#d6d6d6"/><rect x="341.9" y="126.0" width="16.8" height="0.7" fill="#d6d6d6"/><rect x="341.9" y="129.70000000000002" width="16.8" height="0.7" fill="#d6d6d6"/><rect x="341.9" y="133.4" width="16.8" height="0.7" fill="#d6d6d6"/></svg>
<svg class="r" style="left:368px;top:112px;overflow:visible" width="21" height="28" viewBox="368 112 21 28"><rect x="370.1" y="113.7" width="15.3" height="5.6" rx="1" fill="#2a9fe8"/><rect x="370.1" y="119.9" width="15.3" height="5.6" rx="1" fill="#2a9fe8"/><rect x="370.1" y="126.1" width="15.3" height="5.6" rx="1" fill="#2a9fe8"/><rect x="370.1" y="132.3" width="15.3" height="5.6" rx="1" fill="#2a9fe8"/><path d="M381 122.8 L387.6 132 H384 V138.3 H379 V132 H374.4Z" fill="#58b82a"/></svg>
<svg class="r" style="left:399px;top:112px;overflow:visible" width="25" height="28" viewBox="399 112 25 28"><rect x="402" y="114.5" width="19.5" height="17" fill="#e6f3fc"/><rect x="401" y="113.5" width="20.5" height="1.3" fill="#8a9aac"/><rect x="401" y="131" width="20.5" height="1.5" fill="#8a9aac"/><path d="M411.5 132.5 V136 M411.5 136 L406 138 M411.5 136 L417 138" stroke="#9aa8b8" stroke-width="1"/><path d="M410.8 123.6 L412 116 A7.6 7.6 0 1 0 416.6 128.6Z" fill="#1a90e0"/><path d="M411.8 122.6 L413 115.8 A7 7 0 0 1 417.2 118.4Z" fill="#f8c21a"/><path d="M412.6 123.6 L418 119.2 A7.2 7.2 0 0 1 418.2 128Z" fill="#5cb82a"/></svg>
<svg class="r" style="left:484px;top:111px;overflow:visible" width="26" height="30" viewBox="484 111 26 30"><path d="M495.91 115.94 A7.9 9.9 0 0 1 500.55 134.37" stroke="#f5b50f" stroke-width="5.2" fill="none"/><path d="M500.55 134.37 A7.9 9.9 0 0 1 488.73 124.94" stroke="#2aa6ee" stroke-width="5.2" fill="none"/><path d="M488.73 124.94 A7.9 9.9 0 0 1 495.91 115.94" stroke="#58b82a" stroke-width="5.2" fill="none"/></svg>
<svg class="r" style="left:1204px;top:159px;overflow:visible" width="10" height="13" viewBox="1204 159 10 13"><rect x="1205" y="160" width="8" height="10.5" rx="1" fill="#9fd0f3"/><rect x="1205" y="160" width="8" height="1.6" fill="#3b9be0"/><rect x="1205" y="162.8" width="8" height="2" fill="#f5a814"/><rect x="1205" y="166.3" width="8" height="0.7" fill="#dff0fc"/><rect x="1205" y="169" width="8" height="1.5" fill="#3b9be0"/></svg>
<svg class="r" style="left:894px;top:185px;overflow:visible" width="10" height="13" viewBox="894 185 10 13"><rect x="895" y="186" width="8" height="10.5" rx="1" fill="#9fd0f3"/><rect x="895" y="186" width="8" height="1.6" fill="#3b9be0"/><rect x="895" y="188.8" width="8" height="2" fill="#f5a814"/><rect x="895" y="192.3" width="8" height="0.7" fill="#dff0fc"/><rect x="895" y="195" width="8" height="1.5" fill="#3b9be0"/></svg>
<svg class="r" style="left:1194px;top:185px;overflow:visible" width="10" height="13" viewBox="1194 185 10 13"><rect x="1195" y="186" width="8" height="10.5" rx="1" fill="#9fd0f3"/><rect x="1195" y="186" width="8" height="1.6" fill="#3b9be0"/><rect x="1195" y="188.8" width="8" height="2" fill="#f5a814"/><rect x="1195" y="192.3" width="8" height="0.7" fill="#dff0fc"/><rect x="1195" y="195" width="8" height="1.5" fill="#3b9be0"/></svg>
<svg class="r" style="left:710.3px;top:210.5px;overflow:visible" width="11.0" height="14.0" viewBox="710.3 210.5 11.0 14.0"><rect x="711.3" y="211.5" width="9" height="12" fill="#a8d6f6"/><rect x="711.3" y="211.5" width="9" height="1.6" fill="#3b9be0"/><rect x="713.5" y="213.1" width="0.6" height="10.4" fill="#e6f4fd"/><rect x="715.8" y="213.1" width="0.6" height="10.4" fill="#e6f4fd"/><rect x="718.0999999999999" y="213.1" width="0.6" height="10.4" fill="#e6f4fd"/><rect x="711.3" y="215.5" width="9" height="0.6" fill="#e6f4fd"/><rect x="711.3" y="217.9" width="9" height="0.6" fill="#e6f4fd"/><rect x="711.3" y="220.3" width="9" height="0.6" fill="#e6f4fd"/></svg>
<svg class="r" style="left:855px;top:210.5px;overflow:visible" width="11" height="14.0" viewBox="855 210.5 11 14.0"><rect x="856" y="211.5" width="9" height="12" fill="#a8d6f6"/><rect x="856" y="211.5" width="9" height="1.6" fill="#3b9be0"/><rect x="858.2" y="213.1" width="0.6" height="10.4" fill="#e6f4fd"/><rect x="860.5" y="213.1" width="0.6" height="10.4" fill="#e6f4fd"/><rect x="862.8" y="213.1" width="0.6" height="10.4" fill="#e6f4fd"/><rect x="856" y="215.5" width="9" height="0.6" fill="#e6f4fd"/><rect x="856" y="217.9" width="9" height="0.6" fill="#e6f4fd"/><rect x="856" y="220.3" width="9" height="0.6" fill="#e6f4fd"/></svg>
<svg class="r" style="left:1110px;top:210.5px;overflow:visible" width="11" height="14.0" viewBox="1110 210.5 11 14.0"><rect x="1111" y="211.5" width="9" height="12" fill="#a8d6f6"/><rect x="1111" y="211.5" width="9" height="1.6" fill="#3b9be0"/><rect x="1113.2" y="213.1" width="0.6" height="10.4" fill="#e6f4fd"/><rect x="1115.5" y="213.1" width="0.6" height="10.4" fill="#e6f4fd"/><rect x="1117.8" y="213.1" width="0.6" height="10.4" fill="#e6f4fd"/><rect x="1111" y="215.5" width="9" height="0.6" fill="#e6f4fd"/><rect x="1111" y="217.9" width="9" height="0.6" fill="#e6f4fd"/><rect x="1111" y="220.3" width="9" height="0.6" fill="#e6f4fd"/></svg>
<svg class="r" style="left:1206px;top:210.5px;overflow:visible" width="11" height="14.0" viewBox="1206 210.5 11 14.0"><rect x="1207" y="211.5" width="9" height="12" fill="#a8d6f6"/><rect x="1207" y="211.5" width="9" height="1.6" fill="#3b9be0"/><rect x="1209.2" y="213.1" width="0.6" height="10.4" fill="#e6f4fd"/><rect x="1211.5" y="213.1" width="0.6" height="10.4" fill="#e6f4fd"/><rect x="1213.8" y="213.1" width="0.6" height="10.4" fill="#e6f4fd"/><rect x="1207" y="215.5" width="9" height="0.6" fill="#e6f4fd"/><rect x="1207" y="217.9" width="9" height="0.6" fill="#e6f4fd"/><rect x="1207" y="220.3" width="9" height="0.6" fill="#e6f4fd"/></svg>
<svg class="r" style="left:1243px;top:210.5px;overflow:visible" width="11" height="14.0" viewBox="1243 210.5 11 14.0"><rect x="1244" y="211.5" width="9" height="12" fill="#a8d6f6"/><rect x="1244" y="211.5" width="9" height="1.6" fill="#3b9be0"/><rect x="1246.2" y="213.1" width="0.6" height="10.4" fill="#e6f4fd"/><rect x="1248.5" y="213.1" width="0.6" height="10.4" fill="#e6f4fd"/><rect x="1250.8" y="213.1" width="0.6" height="10.4" fill="#e6f4fd"/><rect x="1244" y="215.5" width="9" height="0.6" fill="#e6f4fd"/><rect x="1244" y="217.9" width="9" height="0.6" fill="#e6f4fd"/><rect x="1244" y="220.3" width="9" height="0.6" fill="#e6f4fd"/></svg>
<svg class="r" style="left:855px;top:660px;overflow:visible" width="11" height="14" viewBox="855 660 11 14"><rect x="856" y="661" width="9" height="12" fill="#a8d6f6"/><rect x="856" y="661" width="9" height="1.6" fill="#3b9be0"/><rect x="858.2" y="662.6" width="0.6" height="10.4" fill="#e6f4fd"/><rect x="860.5" y="662.6" width="0.6" height="10.4" fill="#e6f4fd"/><rect x="862.8" y="662.6" width="0.6" height="10.4" fill="#e6f4fd"/><rect x="856" y="665" width="9" height="0.6" fill="#e6f4fd"/><rect x="856" y="667.4" width="9" height="0.6" fill="#e6f4fd"/><rect x="856" y="669.8" width="9" height="0.6" fill="#e6f4fd"/></svg>
<div class="t" style="left:1270.4px;top:919.14px;font-size:13.3px;color:#1e1e1e;font-weight:bold;-webkit-text-stroke:0;transform:scaleX(1.0363);transform-origin:0 0;">men_adm.bsc!treeFrame.tree[649]</div>
</body></html>
